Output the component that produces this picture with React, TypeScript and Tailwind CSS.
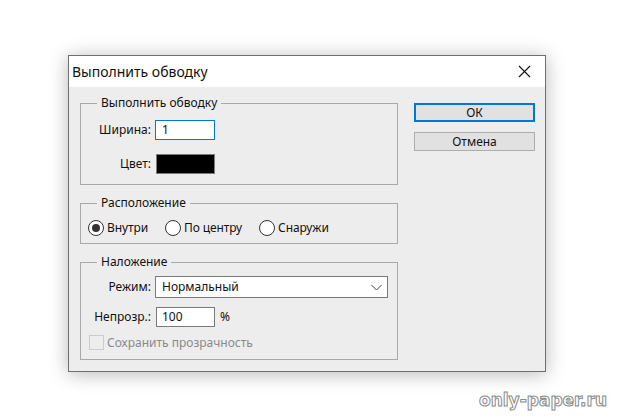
import React from "react";

const font = { fontFamily: '"Segoe UI", "Noto Sans", sans-serif' };

function Group({ title, className, children }: { title: string; className: string; children: React.ReactNode }) {
  return (
    <div className={`relative border border-[#a9a9a9] ${className}`}>
      <span className="absolute -top-[10px] left-[16px] bg-[#ededed] px-[4px] text-[12px] leading-[18px] text-[#111]">
        {title}
      </span>
      {children}
    </div>
  );
}

function Radio({ label, checked }: { label: string; checked?: boolean }) {
  return (
    <div className="flex items-center gap-[3px]">
      <div className="flex h-[16px] w-[16px] items-center justify-center rounded-full border border-[#333] bg-white">
        {checked && <div className="h-[8px] w-[8px] rounded-full bg-[#333]" />}
      </div>
      <span className="text-[12px] leading-[16px] tracking-[-0.1px] text-[#111]">{label}</span>
    </div>
  );
}

export default function App() {
  return (
    <div className="relative h-[420px] w-[618px] overflow-hidden bg-white pl-[68px] pt-[55px]" style={font}>
      {/* dialog */}
      <div className="w-[478px] h-[317px] border border-[#6f6f6f] bg-[#ededed] shadow-[0_2px_18px_rgba(0,0,0,0.28)]">
        <div className="flex h-[31px] items-center justify-between bg-white pl-[3px] pr-[14px]">
          <span className="text-[14px] text-[#111]">Выполнить обводку</span>
          <svg width="13" height="13" viewBox="0 0 13 13" className="text-[#111]">
            <path d="M1 1 L12 12 M12 1 L1 12" stroke="currentColor" strokeWidth="1.1" fill="none" />
          </svg>
        </div>

        <div className="flex pl-[11px] pt-[16px]">
          {/* left column */}
          <div className="flex w-[318px] flex-col gap-[18px]">
            <Group title="Выполнить обводку" className="h-[82px] pt-[16px]">
              <div className="flex items-center">
                <span className="w-[74px] pr-[4px] text-right text-[12px] text-[#111]">Ширина:</span>
                <div className="flex h-[20px] w-[60px] items-center border border-[#0078d7] bg-white pl-[6px] text-[12px] text-[#111]">
                  1
                </div>
              </div>
              <div className="mt-[14px] flex items-center">
                <span className="w-[74px] pr-[4px] text-right text-[12px] text-[#111]">Цвет:</span>
                <div className="ml-[1px] h-[20px] w-[59px] border border-[#7a7a7a] bg-black" />
              </div>
            </Group>

            <Group title="Расположение" className="h-[41px] pl-[7px] pt-[16px]">
              <div className="flex items-center gap-[17px]">
                <Radio label="Внутри" checked />
                <Radio label="По центру" />
                <Radio label="Снаружи" />
              </div>
            </Group>

            <Group title="Наложение" className="h-[98px] pt-[13px]">
              <div className="flex items-center">
                <span className="w-[74px] pr-[4px] text-right text-[12px] text-[#111]">Режим:</span>
                <div className="flex h-[22px] w-[233px] items-center justify-between border border-[#7a7a7a] bg-white pl-[6px] pr-[5px] text-[12px] text-[#111]">
                  <span>Нормальный</span>
                  <svg width="11" height="7" viewBox="0 0 11 7">
                    <path d="M0.5 1 L5.5 6 L10.5 1" stroke="#444" strokeWidth="1" fill="none" />
                  </svg>
                </div>
              </div>
              <div className="mt-[9px] flex items-center">
                <span className="w-[74px] pr-[4px] text-right text-[12px] text-[#111]">Непрозр.:</span>
                <div className="ml-[1px] flex h-[20px] w-[59px] items-center border border-[#7a7a7a] bg-white pl-[5px] text-[12px] text-[#111]">
                  100
                </div>
                <span className="ml-[5px] text-[12px] text-[#111]">%</span>
              </div>
              <div className="mt-[8px] flex items-center pl-[8px]">
                <div className="h-[15px] w-[15px] border border-[#cccccc] bg-[#ededed]" />
                <span className="ml-[3px] text-[12px] leading-[15px] text-[#8a8a8a]">Сохранить прозрачность</span>
              </div>
            </Group>
          </div>

          {/* buttons */}
          <div className="ml-[16px] flex w-[121px] flex-col gap-[10px]">
            <div className="flex h-[19px] items-center justify-center border-2 border-[#0078d7] bg-[#e1e1e1] text-[12px] text-[#111]">
              ОК
            </div>
            <div className="flex h-[19px] items-center justify-center border border-[#adadad] bg-[#e1e1e1] text-[12px] text-[#111]">
              Отмена
            </div>
          </div>
        </div>
      </div>

      {/* watermark */}
      <div
        className="absolute bottom-[7px] right-[11px] text-[17px] font-bold text-white [-webkit-text-stroke:1px_#8a8a8a]"
        style={{ fontFamily: '"DejaVu Sans", sans-serif', textShadow: "0 0 6px rgba(255,255,255,0.9)" }}
      >
        only-paper.ru
      </div>
    </div>
  );
}
